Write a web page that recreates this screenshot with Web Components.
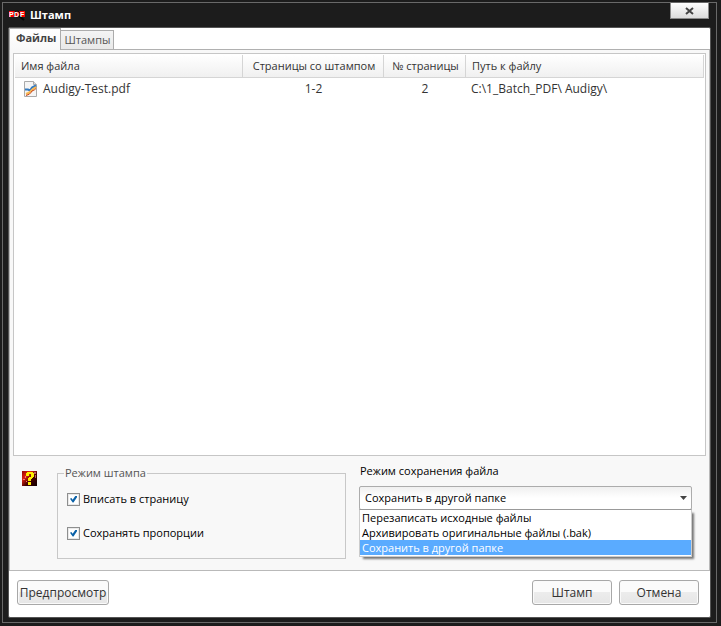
<!DOCTYPE html>
<html lang="ru">
<head>
<meta charset="utf-8">
<title>Штамп</title>
<style>
html, body { height: 100%; }
body { margin: 0; background: #1c1c1c; font: 11px/16px "Open Sans", "Noto Sans", sans-serif; color: #333; }
</style>
</head>
<body>
<app-window caption="Штамп">
  <tab-bar slot="tabs">
    <tab-button selected>Файлы</tab-button>
    <tab-button>Штампы</tab-button>
  </tab-bar>
  <file-list></file-list>
  <options-panel>
    <group-box slot="mode" caption="Режим штампа">
      <check-box>Вписать в страницу</check-box>
      <check-box>Сохранять пропорции</check-box>
    </group-box>
    <drop-down slot="save" caption="Режим сохранения файла"></drop-down>
  </options-panel>
  <button-bar slot="footer">
    <push-button slot="start" wide>Предпросмотр</push-button>
    <push-button>Штамп</push-button>
    <push-button>Отмена</push-button>
  </button-bar>
</app-window>
<script>
const define = (name, html, setup) => {
  const template = document.createElement('template');
  template.innerHTML = '<style>*{box-sizing:border-box}:host{box-sizing:border-box}</style>' + html;
  customElements.define(name, class extends HTMLElement {
    constructor() {
      super();
      this.attachShadow({ mode: 'open' }).append(template.content.cloneNode(true));
    }
    connectedCallback() { if (setup) setup(this.shadowRoot, this); }
  });
};
const setCaption = (root, host) => {
  root.querySelector('.caption').textContent = host.getAttribute('caption');
};

define('app-window', `
<style>
:host { display: block; height: 100%; padding: 2px 4px 3px 2px; }
.frame { height: 100%; display: flex; flex-direction: column; border: 1px solid #696969; padding: 0 5px; }
header { position: relative; display: flex; align-items: center; gap: 5px; height: 24px; flex: none; padding-left: 1px; }
h1 { margin: 0; font: bold 11px/16px "Open Sans", sans-serif; color: #fff; }
header svg { display: block; }
.close { position: absolute; right: 2px; top: -1px; width: 39px; height: 17px; padding: 0; border: 1px solid #8a8a8a; border-top-color: #696969; background: linear-gradient(#fff, #dcdcdc); display: grid; place-items: center; }
.client { flex: 1; min-height: 0; display: flex; flex-direction: column; border: 1px solid #555; border-radius: 2px; background: #fff; margin-bottom: 4px; }
main { flex: 1; min-height: 0; display: flex; flex-direction: column; border: 1px solid #b9b9b9; border-width: 0 1px 1px; background: #f8f8f8; padding: 3px 3px 0; }
</style>
<div class="frame">
  <header>
    <svg width="16" height="12" viewBox="0 0 16 12" aria-hidden="true">
      <path fill="#f00" d="M0 2h16v6H0z"/>
      <circle cx="8" cy="5" r="3" fill="#e00" stroke="#080808"/>
      <path stroke="#050505" stroke-width="2" d="M10 7l5 4"/>
      <text x="0 5 11" y="8" font-family="Liberation Sans" font-weight="bold" font-size="7" fill="#fff">PDF</text>
    </svg>
    <h1 class="caption"></h1>
    <button class="close" aria-label="Закрыть"><svg width="9" height="8" viewBox="0 0 9 8"><path d="M1 1l7 6M8 1L1 7" stroke="#444" stroke-width="2"/></svg></button>
  </header>
  <div class="client">
    <slot name="tabs"></slot>
    <main><slot></slot></main>
    <slot name="footer"></slot>
  </div>
</div>`, setCaption);

define('tab-bar', `
<style>
:host { display: flex; align-items: flex-end; height: 22px; flex: none; border-bottom: 1px solid #b0b0b0; }
</style><slot></slot>`, (root, host) => host.setAttribute('role', 'tablist'));

define('tab-button', `
<style>
:host { display: block; }
button { display: block; height: 19px; padding: 0 3px; margin: 0; border: 1px solid #acacac; border-width: 1px 1px 0 0; background: linear-gradient(#f4f4f4, #e9e9e9); font: inherit; color: #555; }
:host([selected]) button { height: 22px; margin-bottom: -1px; padding: 0 4px 3px 6px; border-left-width: 1px; background: linear-gradient(#fff, #f8f8f8); font-weight: bold; color: #444; }
</style><button role="tab"><slot></slot></button>`);

define('file-list', `
<style>
:host { display: block; flex: 1; min-height: 0; border: 1px solid #c6c6c6; background: #fff; padding: 1px 1px 0; }
table { width: 100%; border-collapse: separate; border-spacing: 0; table-layout: fixed; }
th { height: 23px; padding: 0; font-weight: normal; text-align: center; border-right: 1px solid #d5d5d5; border-bottom: 1px solid #d5d5d5; background: linear-gradient(#fff, #f0f0f0); }
th:first-child, th:last-child { text-align: left; padding-left: 6px; }
td { height: 21px; padding: 0 0 0 4px; text-align: center; white-space: nowrap; font-size: 12px; }
th:nth-child(2), th:nth-child(3) { padding-left: 2px; }
td:nth-child(2), td:nth-child(3) { padding-left: 0; }
td:first-child, td:last-child { text-align: left; }
td:last-child { padding-left: 5px; }
td:first-child { padding-left: 9px; }
.name { display: flex; align-items: center; gap: 5px; }
.file { width: 228px; } .pages { width: 141px; } .count { width: 82px; }
</style>
<table>
  <thead><tr><th class="file">Имя файла</th><th class="pages">Страницы со штампом</th><th class="count">№ страницы</th><th>Путь к файлу</th></tr></thead>
  <tbody><tr><td><div class="name">
    <svg width="14" height="16" viewBox="0 0 14 16" aria-hidden="true">
      <path fill="#f5f5f5" stroke="#aaa" d="M.5.500h9l3 3v12H.5z"/><path fill="#ddd" stroke="#aaa" d="M9.500.5v3h3"/>
      <path fill="none" stroke="#357bc0" stroke-width="2" d="M1 8.500h3l2 1 2-3 4-2"/>
      <path fill="none" stroke="#f8b850" stroke-width="2" d="M2 13q3-1 4-2t2-2 4-3"/>
      <path fill="none" stroke="#c8441c" d="M2 14.500q4-1 5-3t2-2 3-2"/>
    </svg><span>Audigy-Test.pdf</span></div></td><td>1-2</td><td>2</td><td>C:\\1_Batch_PDF\\ Audigy\\</td></tr></tbody>
</table>`);

define('options-panel', `
<style>
:host { display: grid; grid-template-columns: 30px minmax(0, 289fr) minmax(0, 333fr); column-gap: 13px; flex: none; height: 114px; padding: 0 14px 12px 1px; align-items: start; }
.help { margin: 15px 0 0 8px; padding: 0; width: 15px; height: 15px; border: 0; background: none; }
.help svg { display: block; }
</style>
<button class="help" aria-label="Справка"><svg width="15" height="15" viewBox="0 0 15 15">
  <defs><linearGradient id="g" x2="1" y2="1"><stop stop-color="#900"/><stop offset=".3" stop-color="#d21"/><stop offset=".6" stop-color="#400"/><stop offset="1" stop-color="#100"/></linearGradient></defs>
  <path fill="url(#g)" d="M0 0h15v15H0z"/><path fill="#f77" d="M1 8h2v1H1zM3 5h1v2H3zM4 10h1v1H4z"/><path fill="#b66" d="M12 1h2v2h-2zM13 4h1v3h-1z"/>
  <path fill="#fe0" d="M5 1h6v1h1v4h-1v1h-1v1H9v2H6V7h1V6h2V3H7v2H4V2h1zM6 11h3v3H6z"/></svg></button>
<slot name="mode"></slot><slot name="save"></slot>`);

define('group-box', `
<style>
:host { display: block; padding-top: 9px; }
fieldset { margin: 0; min-width: 0; height: 94px; border: 1px solid #c8c8c8; padding: 10px 9px 0; display: block; }
legend { padding: 0 1px; margin-left: -3px; color: #555; height: 16px; }
.stack { display: grid; gap: 18px; }
</style><fieldset><legend class="caption"></legend><div class="stack"><slot></slot></div></fieldset>`, setCaption);

define('check-box', `
<style>
:host { display: block; color: #000; }
label { display: flex; align-items: center; gap: 3px; }
input { appearance: none; flex: none; margin: 0; width: 13px; height: 13px; border: 1px solid #8e8f8f; background: #fff; display: grid; place-items: center; box-shadow: inset 0 0 0 1px #e9e9e9; }
input:checked::before { content: ""; width: 7px; height: 7px; background: #0b62a8; clip-path: polygon(0 45%, 20% 35%, 38% 60%, 80% 0, 100% 0, 100% 25%, 50% 100%, 38% 100%); }
</style><label><input type="checkbox" checked><span><slot></slot></span></label>`);

define('drop-down', `
<style>
:host { display: block; color: #000; padding-top: 7px; }
label { display: block; padding-left: 1px; margin-bottom: 7px; }
.box { position: relative; }
select { appearance: none; display: block; width: 100%; height: 24px; margin: 0; padding: 0 24px 0 5px; border: 1px solid #acacac; border-radius: 2px; background: linear-gradient(#f0f0f0, #fff 50%); font: inherit; color: inherit; }
.arrow { position: absolute; right: 5px; top: 10px; pointer-events: none; }
ul { position: absolute; left: 0; right: 0; top: 23px; margin: 0; padding: 0 0 1px; list-style: none; border: 1px solid #ccc; border-top-color: #999; background: #fff; box-shadow: 3px 3px 2px -1px #777; }
li { height: 15px; line-height: 15px; padding: 0 2px; }
li[aria-selected="true"] { background: #5aabff; color: #fff; }
</style>
<label class="caption" for="mode"></label>
<div class="box">
  <select id="mode"><option>Перезаписать исходные файлы</option><option>Архивировать оригинальные файлы (.bak)</option><option selected>Сохранить в другой папке</option></select>
  <svg class="arrow" width="7" height="4" viewBox="0 0 7 4" aria-hidden="true"><path fill="#444" d="M0 0h7L3.500 4z"/></svg>
  <ul role="listbox"><li role="option">Перезаписать исходные файлы</li><li role="option">Архивировать оригинальные файлы (.bak)</li><li role="option" aria-selected="true">Сохранить в другой папке</li></ul>
</div>`, setCaption);

define('button-bar', `
<style>
:host { display: flex; gap: 7px; flex: none; padding: 9px 11px 12px 8px; }
.gap { flex: 1; }
</style><slot name="start"></slot><div class="gap"></div><slot></slot>`);

define('push-button', `
<style>
:host { display: block; font-size: 12px; }
button { display: block; width: 80px; height: 25px; padding: 0; border: 1px solid #a8a8a8; border-radius: 3px; background: linear-gradient(#fbfbfb 50%, #ececec 50%, #e6e6e6); box-shadow: inset 0 0 0 1px #fafafa; font: inherit; color: #333; }
:host([wide]) button { width: 92px; }
</style><button><slot></slot></button>`);
</script>
</body>
</html>
